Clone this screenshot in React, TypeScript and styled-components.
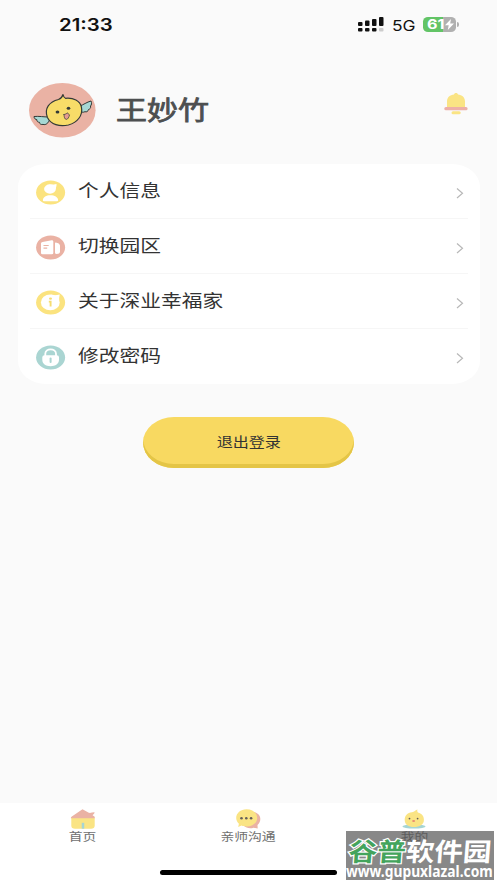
import React from 'react';
import styled, { createGlobalStyle } from 'styled-components';

const GlobalStyle = createGlobalStyle`
  * { box-sizing: border-box; }
  body { margin: 0; background: #fafafa; }
`;

const Screen = styled.div`
  position: relative;
  width: 497px;
  height: 883px;
  overflow: hidden;
  display: flex;
  flex-direction: column;
  background: #fafafa;
  font-family: Inter, "Noto Sans CJK SC", sans-serif;
  color: #333;
`;

const WideText = styled.span<{ $origin?: string; $scale?: number }>`
  display: inline-block;
  white-space: nowrap;
  transform: scaleX(${p => p.$scale ?? 1.2});
  transform-origin: ${p => p.$origin ?? 'left'} center;
`;

const StatusBar = styled.header`
  height: 50px;
  padding: 0 38px 0 59px;
  display: flex;
  align-items: center;
  justify-content: space-between;
  color: #111;
`;

const Clock = styled(WideText)`
  font-size: 17px;
  font-weight: 600;
  line-height: 20px;
`;

const StatusIcons = styled.div`
  display: flex;
  align-items: center;
  margin-top: -1px;
`;

const Network = styled(WideText)`
  width: 31px;
  margin: 2px 0 0 8px;
  font-size: 14.5px;
  font-weight: 400;
  line-height: 20px;
`;

const Battery = styled.div`
  position: relative;
  width: 33px;
  height: 15px;
  border-radius: 5px / 4.5px;
  background: linear-gradient(90deg, #62c466 61%, #b0b0b0 61%);
  color: #fff;
  display: flex;
  align-items: center;
  padding-left: 4px;
  margin-right: 3px;
  &::after {
    content: '';
    position: absolute;
    right: -3px;
    top: 5px;
    width: 2px;
    height: 5px;
    border-radius: 0 2px 2px 0;
    background: #b0b0b0;
  }
`;

const BatteryLevel = styled(WideText)`
  width: 18px;
  font-size: 13.5px;
  font-weight: 700;
  line-height: 15px;
`;

const Profile = styled.section`
  height: 113.5px;
  padding: 33px 28px 0 29px;
  display: flex;
  align-items: flex-start;
`;

const Name = styled.h1`
  margin: 8px 0 0 20px;
  flex: 1;
  font-size: 25.8px;
  line-height: 40px;
  font-weight: 400;
  color: #4d4f50;
  -webkit-text-stroke: 0.8px #4d4f50;
`;

const BellButton = styled.div`
  margin-top: 9px;
  line-height: 0;
`;

const Menu = styled.nav`
  margin: 0 17px 0 17.5px;
  height: 220.5px;
  padding: 0 12.5px;
  border-radius: 28px / 23px;
  background: #fff;
  display: grid;
  grid-template-rows: repeat(4, 1fr);
`;

const MenuRow = styled.div`
  display: flex;
  align-items: center;
  padding: 3px 4px 0 6px;
  border-bottom: 1px solid #f6f6f6;
  &:last-child { border-bottom-color: transparent; }
  svg { flex: none; }
`;

const MenuLabel = styled.div`
  flex: 1;
  margin-left: 12px;
  margin-top: -3px;
  font-size: 17.3px;
  line-height: 26px;
`;

const LogoutButton = styled.button`
  align-self: center;
  width: 211px;
  height: 51px;
  margin: 33px 0 0;
  padding: 0 0 1px;
  border: 0;
  border-radius: 31px / 25.5px;
  background: #f8d961;
  box-shadow: inset 0 -4px 0 #e4c546;
  font: 400 13.4px/20px Inter, "Noto Sans CJK SC", sans-serif;
  color: #333;
`;

const TabBar = styled.footer`
  margin-top: auto;
  height: 80px;
  background: #fff;
  display: grid;
  grid-template-columns: repeat(3, 1fr);
`;

const Tab = styled.div`
  display: flex;
  flex-direction: column;
  align-items: center;
  padding-top: 6px;
  font-size: 11.5px;
  line-height: 16px;
  color: #707070;
`;

const HomeIndicator = styled.div`
  position: absolute;
  left: 160px;
  bottom: 8px;
  width: 177px;
  height: 5px;
  border-radius: 3px;
  background: #000;
`;

const Watermark = styled.div`
  position: absolute;
  left: 346px;
  top: 831px;
  width: 148px;
  height: 49px;
  background: rgba(85, 85, 85, 0.7);
  color: #fff;
`;

const WatermarkTitle = styled.div`
  height: 33px;
  padding: 4px 0 0 3px;
  font: 700 25.5px/29px "Noto Sans CJK SC", sans-serif;
  white-space: nowrap;
`;

const WatermarkWord = styled.span`
  display: inline-block;
  transform: scaleX(1.12) skewX(-4deg);
  transform-origin: left center;
`;

const GreenWord = styled.span`
  color: #43a45c;
  -webkit-text-stroke: 2.4px #fff;
  paint-order: stroke fill;
`;

const WatermarkUrl = styled.div`
  width: 148px;
  font: 700 15.5px/14px "Noto Sans", sans-serif;
  white-space: nowrap;
`;

const UrlText = styled(WideText)`
  width: 148px;
`;

const Signal = () => (
  <svg width="26" height="15" viewBox="0 0 26 15">
    <g fill="#111">
      <rect x="0" y="5" width="4.5" height="4" rx="1" />
      <rect x="7" y="3.5" width="4.5" height="5.5" rx="1" />
      <rect x="14" y="2" width="4.5" height="7" rx="1" />
      <rect x="21" y="0" width="4.5" height="9" rx="1" />
      <rect x="0" y="11" width="4.5" height="3.5" rx="1" />
      <rect x="7" y="11" width="4.5" height="3.5" rx="1" />
      <rect x="14" y="11" width="4.5" height="3.5" rx="1" />
    </g>
    <rect x="21" y="11" width="4.5" height="3.5" rx="1" fill="#ccc" />
  </svg>
);

const Bolt = () => (
  <svg width="9" height="11" viewBox="0 0 9 11">
    <path d="M6 0 0 6.2h3.7L2.8 11 9 4.6H5.2Z" fill="#fff" />
  </svg>
);

const Avatar = () => (
  <svg width="67" height="55" viewBox="0 0 67 55">
    <ellipse cx="33.3" cy="27.3" rx="33.3" ry="27.3" fill="#eab2a4" />
    <g stroke="#343a37" strokeWidth="1" strokeLinejoin="round" strokeLinecap="round">
      <path d="M19 34c-4 0-9-1-14-.5 0 2 1.5 3 3 3.3-.5 1.5 1 2.5 2.5 2.5 0 2 2 2.5 3.5 2.1 3 1 5.5-1.5 6.5-4.5Z" fill="#a6d8d4" />
      <path d="M51 23c3-1 7-4 11-5 1 2 .5 4-.5 5 .5 2-.5 3-2 3.5-.5 2-2 2.8-3.500 2.2-2 1-4 .5-5-.7Z" fill="#a6d8d4" />
      <path d="M29.5 16.5c2.500-1 4-3 4.500-5 .4 2 1 3 2.500 3.800 8-.8 14.500 2.600 15.900 8.700 1.800 8.500-4 15.500-13 18-9 2-17.500-.5-21-7.500-3.500-9 2-15.800 11.100-18Z" fill="#f8dc68" strokeWidth="1.2" />
      <path d="M35 31.5c1.500 0 2.500-1 3.500-1.700.3 1 1.2 1.700 2 2-.5 2.500-1.700 4.600-3.200 4.600-1.600 0-2.300-2.400-2.300-4.900Z" fill="#e69b91" strokeWidth=".7" />
    </g>
    <ellipse cx="28.5" cy="29" rx="1.9" ry="1.5" fill="#343a37" />
    <ellipse cx="39.5" cy="25.3" rx="1.8" ry="1.5" fill="#343a37" />
  </svg>
);

const Bell = () => (
  <svg width="26" height="24" viewBox="0 0 26 24">
    <path d="M4 16V9.500C4 5.500 7 3 11 2.600 11.300.6 14.700.6 15 2.600c4 .4 7 2.900 7 6.900V16Z" fill="#fae484" />
    <rect x="1.3" y="15" width="23.3" height="3.3" rx="1.6" fill="#edb0a8" />
    <rect x="8.5" y="19.3" width="9.2" height="3" rx="1.5" fill="#fae484" />
  </svg>
);

type IconKind = 'user' | 'campus' | 'info' | 'lock';
const discColor: Record<IconKind, string> = {
  user: '#fbe37f', campus: '#eab2a4', info: '#fbe37f', lock: '#aad5d2',
};

const MenuIcon = ({ kind }: { kind: IconKind }) => (
  <svg width="30" height="25" viewBox="0 0 30 25">
    <ellipse cx="14.6" cy="12.5" rx="14.5" ry="12.1" fill={discColor[kind]} />
    {kind === 'user' && (
      <g fill="#fff">
        <ellipse cx="14" cy="9" rx="5.9" ry="4.7" />
        <path d="M13 4.5c3 .5 4.800 0 7.500-.6.3 2-.5 3-.8 5L16 8Z" />
        <path d="M6.8 20.2c.5-3 3.200-4.900 7.600-4.900s7.200 1.900 7.800 4.900q-.2 1-1 1H7.800q-.8 0-1-1Z" />
      </g>
    )}
    {kind === 'campus' && (
      <>
        <path d="M6.5 7 15.8 5.2q1.5 0 1.5 1.200V18q0 1.200-1.500 1.200H6.500Q5 19.200 5 18V8.300q0-1.100 1.500-1.300ZM19.800 7.600q3.700.5 4.200 3v6.200q-.3 2.200-3.300 2.200-1.700 0-1.700-1.200V8.300q0-.8.800-.7Z" fill="#fff" />
        <path d="M7.5 10.5h5.2M7.500 13.100h3.700" stroke="#eab2a4" strokeWidth="1.1" />
      </>
    )}
    {kind === 'info' && (
      <>
        <ellipse cx="14.3" cy="12.4" rx="9.4" ry="7.9" fill="#fff" />
        <path d="M15 4.6c3.500 1.200 6 .2 8.700-.2-.3 2-.7 3.600-.5 6l-5-1Z" fill="#fff" />
        <ellipse cx="14.5" cy="8.6" rx="1.5" ry="1.2" fill="#f6dc70" />
        <path d="M12.8 11.6h1.800v5" fill="none" stroke="#f6dc70" strokeWidth="1.9" />
      </>
    )}
    {kind === 'lock' && (
      <>
        <path d="M9.3 11V8.700c0-5.900 10.700-5.900 10.700 0V11" fill="none" stroke="#fff" strokeWidth="1.8" />
        <path d="M8.5 10.2h12.200q2.300 0 2.300 2v2.600c0 4.200-3.500 6.400-8.400 6.400s-8.300-2.200-8.300-6.400v-2.600q0-2 2.200-2Z" fill="#fff" />
        <path d="M14.6 13.5v3.500" stroke="#aad5d2" strokeWidth="2" strokeLinecap="round" />
      </>
    )}
  </svg>
);

const Chevron = styled(({ className }: { className?: string }) => (
  <svg className={className} width="8" height="12" viewBox="0 0 8 12">
    <path d="m1 1.5 5.500 4.800L1 11" fill="none" stroke="#b8b8b8" strokeWidth="1.2" />
  </svg>
))`
  margin-top: 2px;
`;

const HomeIcon = () => (
  <svg width="26" height="20" viewBox="0 0 26 20">
    <path d="M1.3 8.5h23.4v8q0 3.200-3.700 3.200H5q-3.700 0-3.700-3.200Z" fill="#fae484" />
    <path d="M.8 9.3q0-1 1-1.800L12.500.3l6.300 3.500c2 .4 3.900-.6 5.800-.4-.2 1.700-1.900 2-2 2.900l2.100 1.400v1.600Z" fill="#eab2a4" />
    <path d="M13 13.8v5.9" stroke="#a6d5d4" strokeWidth="2.5" />
  </svg>
);

const ChatIcon = () => (
  <svg width="26" height="20" viewBox="0 0 26 20">
    <path d="M19 3c8 2 7.500 9.500 3.500 13l.2 3.500-4-.8c-4 1.200-7.500.3-10-2Z" fill="#eab2a4" />
    <path d="M11.500.3c6.500 0 10.700 4 10.700 8.700s-4.400 8.500-10.700 8.500c-2 0-3.500-.3-5-.9L3.200 18l.7-3.300C2.200 13.200 1.200 11 1.200 9 1.200 4.300 5.500.3 11.500.3Z" fill="#fae484" />
    <g fill="#65605a"><circle cx="6.5" cy="9.2" r="1.3" /><circle cx="11.3" cy="9.2" r="1.3" /><circle cx="16.1" cy="9.2" r="1.3" /></g>
  </svg>
);

const ChickIcon = () => (
  <svg width="26" height="20" viewBox="0 0 26 20">
    <ellipse cx="13" cy="17.5" rx="11.6" ry="2" fill="#a6d5d4" />
    <path d="M11 3.200C13.300 3 14.500 1 16.500.5c-.5 1.100-.2 2.200.4 2.900 4.500 1.100 6.200 4.500 6 7.600 0 4.800-4.300 7-9.900 7s-9.300-2.500-9.300-7c0-4.300 2.500-7.300 7.300-7.800Z" fill="#fae484" />
    <g fill="#65605a"><circle cx="8.5" cy="9.6" r=".9" /><circle cx="16.6" cy="9.6" r=".9" /></g>
    <ellipse cx="12.6" cy="12" rx="1.5" ry="1.1" fill="#e98c72" />
  </svg>
);

const menuItems: { kind: IconKind; label: string }[] = [
  { kind: 'user', label: '个人信息' },
  { kind: 'campus', label: '切换园区' },
  { kind: 'info', label: '关于深业幸福家' },
  { kind: 'lock', label: '修改密码' },
];

const tabs = [
  { Icon: HomeIcon, label: '首页' },
  { Icon: ChatIcon, label: '亲师沟通' },
  { Icon: ChickIcon, label: '我的' },
];

export default function App() {
  return (
    <>
      <GlobalStyle />
      <Screen>
        <StatusBar>
          <Clock>21:33</Clock>
          <StatusIcons>
            <Signal />
            <Network>5G</Network>
            <Battery><BatteryLevel>61</BatteryLevel><Bolt /></Battery>
          </StatusIcons>
        </StatusBar>
        <Profile>
          <Avatar />
          <Name><WideText>王妙竹</WideText></Name>
          <BellButton><Bell /></BellButton>
        </Profile>
        <Menu>
          {menuItems.map(({ kind, label }) => (
            <MenuRow key={kind}>
              <MenuIcon kind={kind} />
              <MenuLabel><WideText>{label}</WideText></MenuLabel>
              <Chevron />
            </MenuRow>
          ))}
        </Menu>
        <LogoutButton><WideText $origin="center">退出登录</WideText></LogoutButton>
        <TabBar>
          {tabs.map(({ Icon, label }) => (
            <Tab key={label}><Icon /><WideText $origin="center">{label}</WideText></Tab>
          ))}
        </TabBar>
        <HomeIndicator />
        <Watermark>
          <WatermarkTitle>
            <WatermarkWord><GreenWord>谷普</GreenWord>软件园</WatermarkWord>
          </WatermarkTitle>
          <WatermarkUrl><UrlText $scale={0.89}>www.gupuxlazal.com</UrlText></WatermarkUrl>
        </Watermark>
      </Screen>
    </>
  );
}
